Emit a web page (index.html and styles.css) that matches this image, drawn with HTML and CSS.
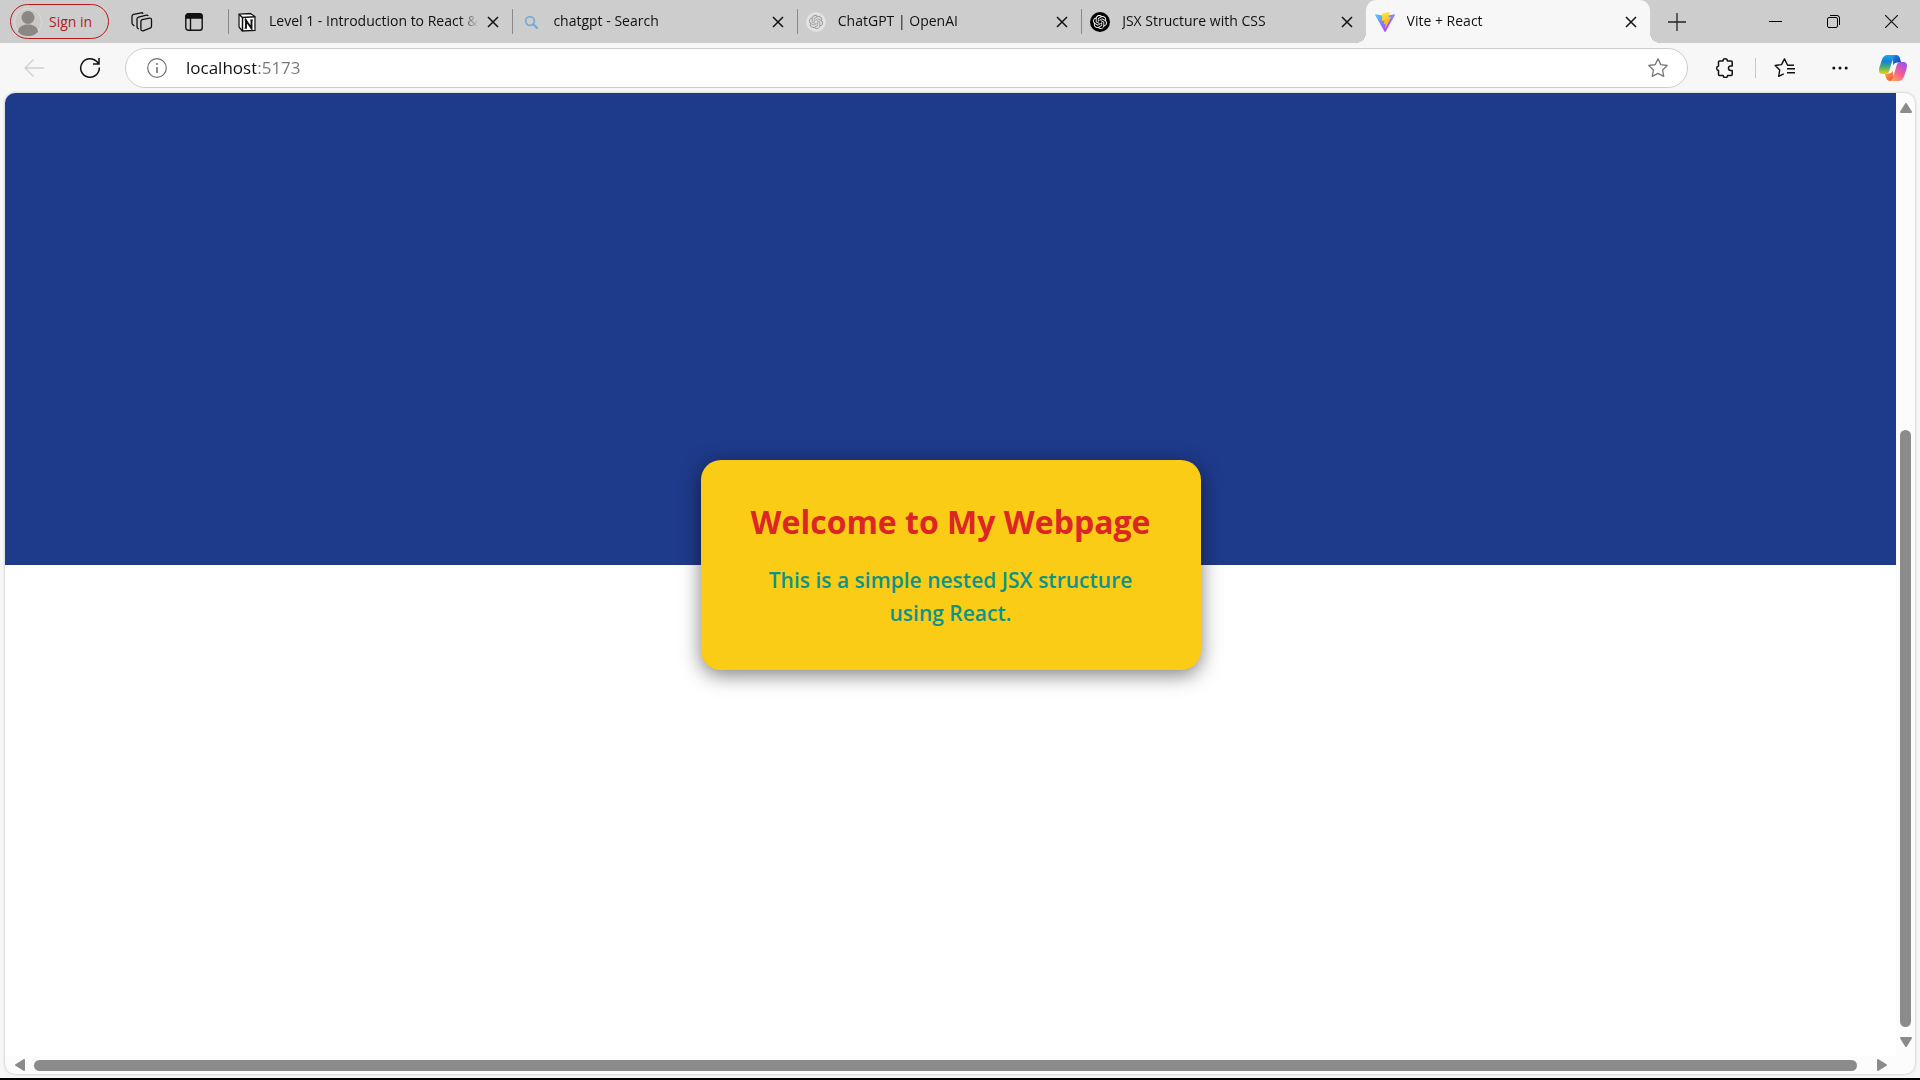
FILE: index.html
```html
<!DOCTYPE html>
<html lang="en">
<head>
<meta charset="utf-8">
<meta name="viewport" content="width=device-width, initial-scale=1">
<title>Vite + React</title>
<link rel="stylesheet" href="styles.css">
</head>
<body>
<svg class="defs" aria-hidden="true">
  <defs>
    <symbol id="close" viewBox="0 0 12 12"><path d="M1 1l10 10M11 1L1 11" fill="none" stroke="currentColor" stroke-width="1.5"/></symbol>
    <symbol id="knot" viewBox="0 0 24 24"><path fill="currentColor" d="M22.2819 9.8211a5.9847 5.9847 0 0 0-.5157-4.9108 6.0462 6.0462 0 0 0-6.5098-2.9A6.0651 6.0651 0 0 0 4.9807 4.1818a5.9847 5.9847 0 0 0-3.9977 2.9 6.0462 6.0462 0 0 0 .7427 7.0966 5.98 5.98 0 0 0 .511 4.9107 6.051 6.051 0 0 0 6.5146 2.9001A5.9847 5.9847 0 0 0 13.2599 24a6.0557 6.0557 0 0 0 5.7718-4.2058 5.9894 5.9894 0 0 0 3.9977-2.9001 6.0557 6.0557 0 0 0-.7475-7.0729zm-9.022 12.6081a4.4755 4.4755 0 0 1-2.8764-1.0408l.1419-.0804 4.7783-2.7582a.7948.7948 0 0 0 .3927-.6813v-6.7369l2.02 1.1686a.071.071 0 0 1 .038.052v5.5826a4.504 4.504 0 0 1-4.4945 4.4944zm-9.6607-4.1254a4.4708 4.4708 0 0 1-.5346-3.0137l.142.0852 4.783 2.7582a.7712.7712 0 0 0 .7806 0l5.8428-3.3685v2.3324a.0804.0804 0 0 1-.0332.0615L9.74 19.9502a4.4992 4.4992 0 0 1-6.1408-1.6464zM2.3408 7.8956a4.485 4.485 0 0 1 2.3655-1.9728V11.6a.7664.7664 0 0 0 .3879.6765l5.8144 3.3543-2.0201 1.1685a.0757.0757 0 0 1-.071 0l-4.8303-2.7865A4.504 4.504 0 0 1 2.3408 7.872zm16.5963 3.8558L13.1038 8.364 15.1192 7.2a.0757.0757 0 0 1 .071 0l4.8303 2.7913a4.4944 4.4944 0 0 1-.6765 8.1042v-5.6772a.79.79 0 0 0-.407-.667zm2.0107-3.0231l-.142-.0852-4.7735-2.7818a.7759.7759 0 0 0-.7854 0L9.409 9.2297V6.8974a.0662.0662 0 0 1 .0284-.0615l4.8303-2.7866a4.4992 4.4992 0 0 1 6.6802 4.66zM8.3065 12.863l-2.02-1.1638a.0804.0804 0 0 1-.038-.0567V6.0742a4.4992 4.4992 0 0 1 7.3757-3.4537l-.142.0805L8.704 5.459a.7948.7948 0 0 0-.3927.6813zm1.0976-2.3654l2.602-1.4998 2.6069 1.4998v2.9994l-2.5974 1.4997-2.6067-1.4997Z"/></symbol>
    <linearGradient id="vite-blue" x1="0" y1="0" x2="0.6" y2="1"><stop offset="0" stop-color="#41d1ff"/><stop offset="1" stop-color="#bd34fe"/></linearGradient>
    <linearGradient id="vite-gold" x1="0.4" y1="0" x2="0.6" y2="1"><stop offset="0" stop-color="#ffea83"/><stop offset="0.1" stop-color="#ffdd35"/><stop offset="1" stop-color="#ffa800"/></linearGradient>
    <linearGradient id="pilot-left" x1="0" y1="0" x2="0" y2="1"><stop offset="0" stop-color="#1aa7ea"/><stop offset="0.35" stop-color="#1580d8"/><stop offset="0.65" stop-color="#4fb26b"/><stop offset="1" stop-color="#f5cf0c"/></linearGradient>
    <linearGradient id="pilot-right" x1="0.8" y1="0" x2="0.2" y2="1"><stop offset="0" stop-color="#9a4df5"/><stop offset="0.5" stop-color="#ee5a9a"/><stop offset="1" stop-color="#ffa05c"/></linearGradient>
    <linearGradient id="pilot-top" x1="0" y1="0" x2="1" y2="1"><stop offset="0" stop-color="#1b8de0"/><stop offset="1" stop-color="#1738c0"/></linearGradient>
    <linearGradient id="pilot-bottom" x1="0" y1="0" x2="1" y2="1"><stop offset="0" stop-color="#ffb02e"/><stop offset="1" stop-color="#ee4a4a"/></linearGradient>
  </defs>
</svg>

<header class="tab-strip">
  <div class="profile">
    <button class="sign-in" type="button">
      <svg class="avatar" viewBox="0 0 28 28" aria-hidden="true"><circle cx="14" cy="14" r="13.500" fill="#cbc8c6" stroke="#dcdad8"/><circle cx="14" cy="9.500" r="6.500" fill="#8a8785"/><path d="M4 24c0-5 4.500-7.500 10-7.500s10 2.500 10 7.500a14 14 0 0 1-20 0z" fill="#8a8785"/></svg>
      <span>Sign in</span>
    </button>
    <button class="icon-button" type="button" aria-label="Workspaces">
      <svg width="22" height="20" viewBox="0 0 22 20" fill="none" stroke="#111" stroke-width="1.300" aria-hidden="true"><path d="M11.200 7.700l7.300-1.600a1.700 1.700 0 0 1 2 1.700v6.500a2 2 0 0 1-1.500 1.900l-6.900 2.600a1.700 1.700 0 0 1-2.200-1.600V9.600a2 2 0 0 1 1.300-1.900z"/><path d="M7.700 17l-1-.8a2 2 0 0 1-.7-1.500V7a2 2 0 0 1 1.500-1.900l8.100-1.900q1-.2 1.600.8"/><path d="M3.300 14l-1.600-1.500a2 2 0 0 1-.7-1.500V4.300a2 2 0 0 1 1.500-1.900L10.300.8q1.200-.2 1.900.8"/></svg>
    </button>
    <button class="icon-button" type="button" aria-label="Tab actions menu">
      <svg width="18" height="18" viewBox="0 0 18 18" fill="none" stroke="#111" stroke-width="1.400" aria-hidden="true"><rect x=".8" y=".8" width="16.400" height="16.400" rx="2.500"/><path d="M1 3.500A2.500 2.500 0 0 1 3.500 1h11A2.500 2.500 0 0 1 17 3.500V5H1z" fill="#111"/><path d="M5.500 5v12"/></svg>
    </button>
  </div>

  <nav class="tabs" aria-label="Tabs">
    <div class="tab">
      <svg class="favicon" viewBox="0 0 20 20" aria-hidden="true"><path d="M1 1.500L14 .6 18.500 4v15L5 19.500 1 15z" fill="#fff"/><path d="M2 2.200L13.500 1.500l4.500 3v14L5.300 19 2 15z" fill="#fff" stroke="#111" stroke-width="1.300"/><path d="M2 2.200l3.500 3.300L18 4.700M5.500 5.500V19" fill="none" stroke="#111" stroke-width="1.500"/><path d="M9 16V8.400l5.500 7.800V8" fill="none" stroke="#111" stroke-width="1.900"/><path d="M7.500 8h2.500M13.300 8h2.700M7.500 16.200h2.500" stroke="#111"/></svg>
      <a class="tab-title" href="#">Level 1 - Introduction to React &amp;</a>
      <button class="tab-close" type="button" aria-label="Close tab"><svg width="12" height="12" aria-hidden="true"><use href="#close"/></svg></button>
    </div>
    <div class="tab">
      <svg class="favicon" viewBox="0 0 20 20" aria-hidden="true"><circle cx="9" cy="9" r="4.300" fill="none" stroke="#76a9d8" stroke-width="1.700"/><path d="M12.300 12.300l3.700 3.700" stroke="#76a9d8" stroke-width="2.300" stroke-linecap="round"/></svg>
      <a class="tab-title" href="#">chatgpt - Search</a>
      <button class="tab-close" type="button" aria-label="Close tab"><svg width="12" height="12" aria-hidden="true"><use href="#close"/></svg></button>
    </div>
    <div class="tab">
      <svg class="favicon pale" viewBox="0 0 20 20" aria-hidden="true"><circle cx="10" cy="10" r="10" fill="#e2e2e2"/><use href="#knot" x="3" y="3" width="14" height="14"/></svg>
      <a class="tab-title" href="#">ChatGPT | OpenAI</a>
      <button class="tab-close" type="button" aria-label="Close tab"><svg width="12" height="12" aria-hidden="true"><use href="#close"/></svg></button>
    </div>
    <div class="tab">
      <svg class="favicon dark" viewBox="0 0 20 20" aria-hidden="true"><circle cx="10" cy="10" r="10" fill="#000"/><use href="#knot" x="3" y="3" width="14" height="14"/></svg>
      <a class="tab-title" href="#">JSX Structure with CSS</a>
      <button class="tab-close" type="button" aria-label="Close tab"><svg width="12" height="12" aria-hidden="true"><use href="#close"/></svg></button>
    </div>
    <div class="tab active">
      <svg class="favicon" viewBox="0 0 256 257" aria-hidden="true"><path fill="url(#vite-blue)" d="M255.153 37.938L134.897 252.976c-2.483 4.440-8.862 4.466-11.382.048L.875 37.958c-2.746-4.814 1.371-10.646 6.827-9.670l120.385 21.517a6.537 6.537 0 0 0 2.322-.004l117.867-21.483c5.438-.991 9.574 4.796 6.877 9.620Z"/><path fill="url(#vite-gold)" d="M185.432.063L96.440 17.501a3.268 3.268 0 0 0-2.634 3.014l-5.474 92.456a3.268 3.268 0 0 0 3.997 3.378l24.777-5.718c2.318-.535 4.413 1.507 3.936 3.838l-7.361 36.047c-.495 2.426 1.782 4.500 4.151 3.780l15.304-4.649c2.372-.720 4.652 1.360 4.150 3.788l-11.698 56.621c-.732 3.542 3.979 5.473 5.943 2.437l1.313-2.028 72.516-144.720c1.215-2.423-.880-5.186-3.540-4.672l-25.505 4.922c-2.396.462-4.435-1.770-3.759-4.114l16.646-57.705c.677-2.350-1.370-4.583-3.769-4.113Z"/></svg>
      <a class="tab-title" href="#" aria-current="page">Vite + React</a>
      <button class="tab-close" type="button" aria-label="Close tab"><svg width="12" height="12" aria-hidden="true"><use href="#close"/></svg></button>
    </div>
  </nav>

  <div class="window-controls">
    <button class="new-tab" type="button" aria-label="New tab"><svg width="18" height="18" viewBox="0 0 18 18" aria-hidden="true"><path d="M9 0v18M0 9h18" stroke="#222" stroke-width="1.300"/></svg></button>
    <button type="button" aria-label="Minimize"><svg width="13" height="13" viewBox="0 0 13 13" aria-hidden="true"><path d="M0 6.500h13" stroke="#000"/></svg></button>
    <button type="button" aria-label="Restore"><svg width="13" height="13" viewBox="0 0 13 13" fill="none" stroke="#000" aria-hidden="true"><rect x=".5" y="2.500" width="10" height="10" rx="1.500"/><path d="M3 .5h7a2.500 2.500 0 0 1 2.500 2.500v7"/></svg></button>
    <button type="button" aria-label="Close"><svg width="13" height="13" viewBox="0 0 13 13" aria-hidden="true"><path d="M0 0l13 13M13 0L0 13" stroke="#111" stroke-width="1.200"/></svg></button>
  </div>
</header>

<div class="toolbar">
  <button class="tool" type="button" aria-label="Back" disabled><svg width="20" height="18" viewBox="0 0 20 18" fill="none" stroke="#cfcfcf" stroke-width="1.300" aria-hidden="true"><path d="M20 9H1M9.500.5L1 9l8.500 8.500"/></svg></button>
  <button class="tool" type="button" aria-label="Refresh"><svg width="22" height="22" viewBox="0 0 22 22" fill="none" stroke="#111" stroke-width="1.500" aria-hidden="true"><path d="M20.300 10.500A9.300 9.300 0 1 1 17.800 4.600L19.500 6.400M20 1v6h-6"/></svg></button>
  <div class="address">
    <button class="address-button" type="button" aria-label="Site information"><svg width="20" height="20" viewBox="0 0 20 20" fill="none" stroke="#707070" stroke-width="1.200" aria-hidden="true"><circle cx="10" cy="10" r="9.300"/><path d="M10 9v6" stroke-width="1.600"/><circle cx="10" cy="6" r="1" fill="#707070" stroke="none"/></svg></button>
    <input class="address-input" type="text" value="localhost:5173" aria-label="Address and search bar">
    <button class="address-button" type="button" aria-label="Add to favorites"><svg width="20" height="20" viewBox="0 0 20 20" fill="none" stroke="#777" stroke-width="1.300" stroke-linejoin="round" aria-hidden="true"><path d="M10 .8l2.800 5.800 6.400.9-4.600 4.500 1.100 6.400L10 15.400l-5.700 3 1.100-6.400L.8 7.500l6.400-.9z"/></svg></button>
  </div>
  <button class="tool extensions" type="button" aria-label="Extensions"><svg width="20" height="20" viewBox="0 0 20 20" fill="none" stroke="#111" stroke-width="1.500" stroke-linejoin="round" aria-hidden="true"><path d="M4.500 3H8a2.200 2.200 0 0 1 4.400 0h3.800q1 0 1 1v4h-1.500a2.200 2.200 0 0 0 0 4.400h1.500v4q0 1-1 1h-3.600a2.200 2.200 0 0 1-4.400 0H4.500q-1 0-1-1v-4a2.300 2.300 0 0 1 0-4.500V4q0-1 1-1z"/></svg></button>
  <span class="divider"></span>
  <button class="tool favorites" type="button" aria-label="Favorites"><svg width="22" height="20" viewBox="0 0 22 20" fill="none" stroke="#111" stroke-width="1.400" stroke-linejoin="round" aria-hidden="true"><path d="M20 7.200h-6.400L10.500.9 7.500 6.600l-6.300.9 4.500 4.500-1 6.400 5-2.600M13 10.800h8M13 14.800h8"/></svg></button>
  <button class="tool more" type="button" aria-label="Settings and more"><svg width="16" height="4" viewBox="0 0 16 4" fill="#111" aria-hidden="true"><circle cx="1.800" cy="2" r="1.500"/><circle cx="8" cy="2" r="1.500"/><circle cx="14.200" cy="2" r="1.500"/></svg></button>
  <button class="tool copilot" type="button" aria-label="Copilot"><svg width="28" height="26" viewBox="0 0 28 26" aria-hidden="true"><path d="M13 0h4.500q2.500 0 3.300 2.700L22.200 7.500H18q-2.800 0-3.600 2.700z" fill="url(#pilot-top)"/><path d="M15 26h-4.500q-2.500 0-3.300-2.700L5.800 18.500H10q2.800 0 3.600-2.700z" fill="url(#pilot-bottom)"/><path d="M8.500 0H17q-2 .3-3 3.500l-3.700 12.300Q9.300 19 6 19H3.500C-.5 19-.3 15 .5 12L3 4.500Q4.500 0 8.500 0z" fill="url(#pilot-left)"/><path d="M19.500 26H11q2-.3 3-3.500l3.700-12.300Q18.700 7 22 7h2.500c4 0 3.800 4 3 7L25 21.500Q23.500 26 19.500 26z" fill="url(#pilot-right)"/></svg></button>
</div>

<main class="frame">
  <div class="page">
    <section class="hero">
      <article class="card">
        <h1>Welcome to My Webpage</h1>
        <p>This is a simple nested JSX structure using React.</p>
      </article>
    </section>
  </div>
  <div class="scrollbar vertical">
    <button type="button" aria-label="Scroll up"><svg width="12" height="10" viewBox="0 0 12 10" aria-hidden="true"><path d="M6 1l5 8H1z"/></svg></button>
    <div class="track"><div class="thumb"></div></div>
    <button type="button" aria-label="Scroll down"><svg width="12" height="10" viewBox="0 0 12 10" aria-hidden="true"><path d="M6 9l5-8H1z"/></svg></button>
  </div>
  <div class="scrollbar horizontal">
    <button type="button" aria-label="Scroll left"><svg width="10" height="12" viewBox="0 0 10 12" aria-hidden="true"><path d="M1 6l8-5v10z"/></svg></button>
    <div class="track"><div class="thumb"></div></div>
    <button type="button" aria-label="Scroll right"><svg width="10" height="12" viewBox="0 0 10 12" aria-hidden="true"><path d="M9 6L1 1v10z"/></svg></button>
  </div>
</main>
</body>
</html>
```
FILE: styles.css
```css
* {
  box-sizing: border-box;
}

body {
  display: flex;
  flex-direction: column;
  height: 100vh;
  margin: 0;
  border-bottom: 2px solid #000;
  background: #f7f7f7;
  color: #111;
  font-family: "Open Sans", "Noto Sans", sans-serif;
  font-size: 14px;
}

.defs {
  position: absolute;
  width: 0;
  height: 0;
}

button {
  display: flex;
  align-items: center;
  justify-content: center;
  flex: none;
  padding: 0;
  border: 0;
  background: none;
  color: inherit;
  font: inherit;
}

/* Tab strip */
.tab-strip {
  display: flex;
  flex: none;
  height: 43px;
  background: #cdcdcd;
}

.profile {
  display: flex;
  flex: none;
  align-items: center;
  width: 228px;
  padding-left: 10px;
}

.sign-in {
  justify-content: flex-start;
  gap: 7px;
  width: 99px;
  height: 35px;
  margin-right: 7px;
  padding-left: 3px;
  border: 1px solid #b01c20;
  border-radius: 18px;
  color: #b01c20;
}

.avatar {
  width: 28px;
  height: 28px;
}

.icon-button {
  width: 52px;
  height: 36px;
}

.tabs {
  display: grid;
  flex: 1;
  grid-template-columns: repeat(5, minmax(0, 1fr));
}

.tab {
  display: flex;
  align-items: center;
  padding: 0 9px;
  background: linear-gradient(#8a8a8a, #8a8a8a) left 9px / 1px 25px no-repeat;
}

.tab.active {
  position: relative;
  border-radius: 10px 10px 0 0;
  background: #f7f7f7;
}

.tab.active::before,
.tab.active::after {
  position: absolute;
  bottom: 0;
  width: 10px;
  height: 10px;
  content: "";
}

.tab.active::before {
  right: 100%;
  background: radial-gradient(circle at 0 0, transparent 10px, #f7f7f7 10px);
}

.tab.active::after {
  left: 100%;
  background: radial-gradient(circle at 100% 0, transparent 10px, #f7f7f7 10px);
}

.favicon {
  flex: none;
  width: 20px;
  height: 20px;
}

.favicon.pale {
  color: #999;
}

.favicon.dark {
  color: #fff;
}

.tab-title {
  flex: 1;
  min-width: 0;
  margin-left: 12px;
  padding-bottom: 2px;
  overflow: hidden;
  color: #111;
  text-decoration: none;
  white-space: nowrap;
  -webkit-mask-image: linear-gradient(to left, transparent, #000 20px);
  mask-image: linear-gradient(to left, transparent, #000 20px);
}

.tab-close {
  width: 20px;
  height: 20px;
  margin-left: 4px;
}

.window-controls {
  display: flex;
  flex: none;
  width: 270px;
}

.window-controls button {
  width: 58px;
}

.window-controls .new-tab {
  width: 54px;
  margin-right: 42px;
}

/* Toolbar */
.toolbar {
  display: flex;
  flex: none;
  align-items: center;
  height: 50px;
  padding: 0 12px 0 6px;
}

.tool {
  width: 56px;
  height: 40px;
}

.address {
  display: flex;
  flex: 1;
  align-items: center;
  height: 40px;
  margin-left: 7px;
  padding: 0 18px 0 20px;
  border: 1px solid #cdcdcd;
  border-radius: 20px;
  background: #fff;
}

.address-button {
  width: 22px;
  height: 24px;
}

.address-input {
  flex: 1;
  min-width: 0;
  margin-left: 18px;
  padding: 0 0 2px;
  border: 0;
  outline: 0;
  background: linear-gradient(to right, #111 70px, #767676 70px);
  -webkit-background-clip: text;
  background-clip: text;
  color: transparent;
  font: inherit;
  font-size: 17px;
}

.extensions {
  width: 40px;
  margin: 0 10px 0 17px;
}

.divider {
  width: 1px;
  height: 20px;
  background: #c8c8c8;
}

.favorites {
  width: 58px;
}

.more {
  width: 52px;
}

.copilot {
  width: 30px;
  margin-left: 12px;
}

/* Page viewport with its scrollbars */
.frame {
  display: grid;
  flex: 1;
  grid-template-columns: minmax(0, 1fr) 19px;
  grid-template-rows: minmax(0, 1fr) 18px;
  min-height: 0;
  margin: 0 5px 4px;
  overflow: hidden;
  border-radius: 10px;
  background: #fcfcfc;
  box-shadow: 0 0 3px rgba(0, 0, 0, 0.25);
}

.page {
  background: #fff;
}

.hero {
  position: relative;
  height: 49%;
  background: #1e3a8a;
}

.card {
  position: absolute;
  top: 100%;
  left: 50%;
  width: 500px;
  padding: 40px 48px;
  border-radius: 20px;
  background: #facc15;
  box-shadow: 0 5px 20px rgba(0, 0, 0, 0.5);
  text-align: center;
  transform: translate(-50%, -50%);
}

.card h1 {
  margin: 0 0 20px;
  color: #dc2626;
  font-size: 32px;
  font-weight: 700;
  line-height: 44px;
  white-space: nowrap;
}

.card p {
  margin: 0;
  padding: 0 8px;
  color: #0d9488;
  font-size: 21px;
  font-weight: 600;
  line-height: 33px;
}

.scrollbar {
  display: flex;
}

.scrollbar svg {
  fill: #8b8b8b;
  stroke: #8b8b8b;
  stroke-linejoin: round;
  stroke-width: 2;
}

.track {
  display: flex;
  flex: 1;
}

.thumb {
  border-radius: 6px;
  background: #8b8b8b;
}

.vertical {
  flex-direction: column;
}

.vertical button {
  height: 29px;
}

.vertical .track {
  align-items: flex-end;
  justify-content: center;
}

.vertical .thumb {
  width: 11px;
  height: 66%;
}

.horizontal button {
  width: 29px;
}

.horizontal .track {
  align-items: center;
  padding-right: 10px;
}

.horizontal .thumb {
  width: 100%;
  height: 11px;
}
```
